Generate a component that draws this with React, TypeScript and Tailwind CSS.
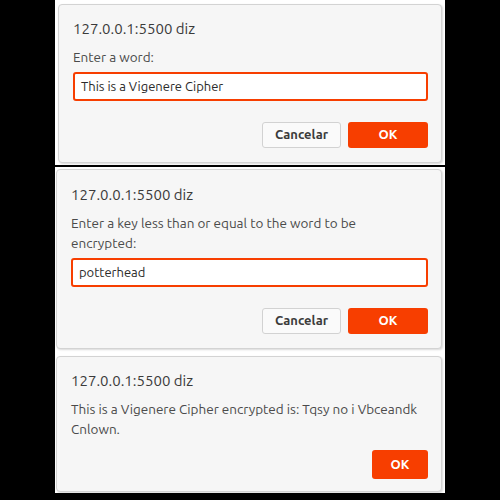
import React from "react";

const font = { fontFamily: "Ubuntu, Roboto, 'Noto Sans', sans-serif" };

function Buttons({ cancel = true, tall = false }: { cancel?: boolean; tall?: boolean }) {
  const h = tall ? "h-[29px]" : "h-[26px]";
  return (
    <div className="flex justify-end gap-[7px]">
      {cancel && (
        <button
          className={`${h} w-[79px] rounded-[3px] border border-[#d2d2d2] bg-[#fafafa] text-[13px] font-bold text-[#3c3c3c]`}
        >
          Cancelar
        </button>
      )}
      <button
        className={`${h} ${cancel ? "w-[80px]" : "w-[56px]"} rounded-[3px] bg-[#f73e00] text-[13px] font-bold text-white`}
      >
        OK
      </button>
    </div>
  );
}

function Title() {
  return <div className="text-[15px] leading-5 text-[#3b3b3b]">127.0.0.1:5500 diz</div>;
}

export default function App() {
  return (
    <div className="w-[500px] h-[500px] bg-black pl-[55px] flex flex-col" style={font}>
      <div className="w-[390px] h-[165px] bg-white pt-[4px] px-[3px]">
        <div className="h-[159px] rounded-[4px] border border-[#d3d3d3] bg-[#f6f6f6] shadow-[1px_1px_2px_rgba(0,0,0,0.15)] pl-[14px] pr-[13px] pt-[14px]">
          <Title />
          <div className="mt-[8px] text-[13.5px] leading-5 text-[#4a4a4a]">Enter a word:</div>
          <div className="mt-[5px] h-[29px] rounded-[3px] border-2 border-[#f73e00] bg-white pl-[6px] flex items-center text-[13px] text-[#2b2b2b]">
            This is a Vigenere Cipher
          </div>
          <div className="mt-[21px]">
            <Buttons />
          </div>
        </div>
      </div>
      <div className="h-[2px]" />
      <div className="w-[390px] h-[326px] bg-white pt-[2px] pl-[1px] pr-[3px]">
        <div className="h-[180px] rounded-[4px] border border-[#d3d3d3] bg-[#f6f6f6] shadow-[1px_1px_2px_rgba(0,0,0,0.15)] pl-[14px] pr-[13px] pt-[15px]">
          <Title />
          <div className="mt-[8px] text-[13.5px] leading-5 text-[#4a4a4a]">
            Enter a key less than or equal to the word to be
            <br />
            encrypted:
          </div>
          <div className="mt-[5px] h-[29px] rounded-[3px] border-2 border-[#f73e00] bg-white pl-[6px] flex items-center text-[13px] text-[#2b2b2b]">
            potterhead
          </div>
          <div className="mt-[21px]">
            <Buttons />
          </div>
        </div>
        <div className="mt-[7px] h-[136px] rounded-[4px] border border-[#d3d3d3] bg-[#f6f6f6] shadow-[1px_1px_2px_rgba(0,0,0,0.15)] pl-[14px] pr-[13px] pt-[14px]">
          <Title />
          <div className="mt-[8px] text-[13.5px] leading-5 text-[#4a4a4a] whitespace-nowrap">
            This is a Vigenere Cipher encrypted is: Tqsy no i Vbceandk
            <br />
            Cnlown.
          </div>
          <div className="mt-[11px]">
            <Buttons cancel={false} tall />
          </div>
        </div>
      </div>
    </div>
  );
}
